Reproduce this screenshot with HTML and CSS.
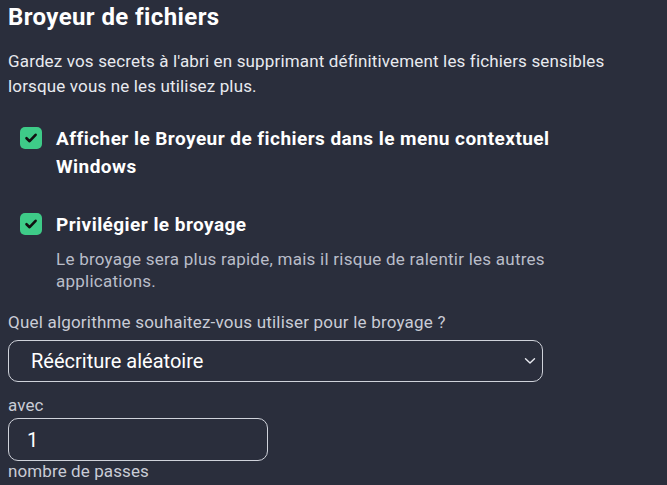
FILE: index.html
```html
<!DOCTYPE html>
<html lang="fr">
<head>
<meta charset="utf-8">
<link rel="stylesheet" href="styles.css">
</head>
<body>
<main class="page">
  <h1 class="title">Broyeur de fichiers</h1>
  <p class="intro">Gardez vos secrets à l'abri en supprimant définitivement les fichiers sensibles lorsque vous ne les utilisez plus.</p>

  <div class="option option-first">
    <span class="check" aria-hidden="true">
      <svg viewBox="0 0 22 22" width="22" height="22"><path d="M6.5 11.2 L9.6 14.2 L15.6 7.8" fill="none" stroke="#111" stroke-width="2.6" stroke-linecap="round" stroke-linejoin="round"/></svg>
    </span>
    <div class="option-body">
      <div class="option-label">Afficher le Broyeur de fichiers dans le menu contextuel Windows</div>
    </div>
  </div>

  <div class="option option-second">
    <span class="check" aria-hidden="true">
      <svg viewBox="0 0 22 22" width="22" height="22"><path d="M6.5 11.2 L9.6 14.2 L15.6 7.8" fill="none" stroke="#111" stroke-width="2.6" stroke-linecap="round" stroke-linejoin="round"/></svg>
    </span>
    <div class="option-body">
      <div class="option-label">Privilégier le broyage</div>
      <div class="option-help">Le broyage sera plus rapide, mais il risque de ralentir les autres applications.</div>
    </div>
  </div>

  <div class="field-label">Quel algorithme souhaitez-vous utiliser pour le broyage ?</div>
  <div class="select">
    <span class="select-value">Réécriture aléatoire</span>
    <svg class="chevron" viewBox="0 0 12 8" width="12" height="8"><path d="M1.5 1.8 L6 6 L10.5 1.8" fill="none" stroke="#e8eaf0" stroke-width="1.4" stroke-linecap="round" stroke-linejoin="round"/></svg>
  </div>

  <div class="small-label">avec</div>
  <div class="input"><span class="input-value">1</span></div>
  <div class="small-label after">nombre de passes</div>
</main>
</body>
</html>
```

FILE: styles.css
```css
html, body {
  margin: 0;
  padding: 0;
  background: #2a2e3c;
  height: 100%;
  overflow: hidden;
}
body {
  font-family: Roboto, "Liberation Sans", sans-serif;
  color: #f2f3f6;
}
.page {
  padding: 2px 8px 0 8px;
  width: 612px;
}
.title {
  margin: 0;
  font-size: 24px;
  line-height: 30px;
  font-weight: 700;
  letter-spacing: 0.4px;
  color: #ffffff;
}
.intro {
  margin: 17px 0 0 0;
  font-size: 17px;
  line-height: 25px;
  letter-spacing: 0.15px;
  color: #e8eaef;
}
.option {
  display: flex;
  align-items: flex-start;
  gap: 14px;
  padding-left: 12px;
}
.option-first { margin-top: 26px; }
.option-second { margin-top: 30px; }
.check {
  flex: none;
  width: 22px;
  height: 22px;
  margin-top: 2px;
  border-radius: 5px;
  background: #3ecb88;
  display: flex;
}
.option-label {
  font-size: 19px;
  line-height: 28px;
  font-weight: 700;
  letter-spacing: 0.45px;
  color: #ffffff;
}
.option-help {
  margin-top: 9px;
  font-size: 17px;
  line-height: 22px;
  letter-spacing: 0.25px;
  color: #b9bdc9;
}
.field-label {
  margin-top: 18px;
  font-size: 17px;
  line-height: 24px;
  letter-spacing: 0.2px;
  color: #c9ccd6;
}
.select {
  margin-top: 6px;
  width: 535px;
  height: 42px;
  box-sizing: border-box;
  border: 1px solid #cfd2da;
  border-radius: 10px;
  display: flex;
  align-items: center;
  justify-content: space-between;
  padding: 0 6px 0 22px;
}
.select-value {
  font-size: 20px;
  color: #ffffff;
}
.chevron { display: block; }
.small-label {
  margin-top: 13px;
  font-size: 17px;
  line-height: 20px;
  letter-spacing: 0.1px;
  color: #c9ccd6;
}
.small-label.after { margin-top: 0; }
.input {
  margin-top: 3px;
  width: 260px;
  height: 43px;
  box-sizing: border-box;
  border: 1px solid #cfd2da;
  border-radius: 10px;
  display: flex;
  align-items: center;
  padding-left: 18px;
}
.input-value {
  font-size: 20px;
  color: #ffffff;
}
```
